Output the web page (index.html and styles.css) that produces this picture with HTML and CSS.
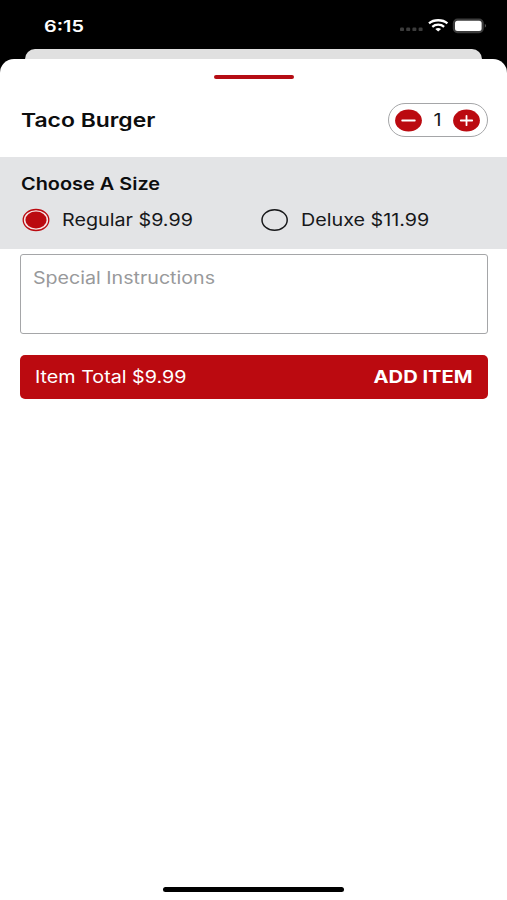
FILE: index.html
```html
<!DOCTYPE html>
<html lang="en">
<head>
<meta charset="utf-8">
<title>Taco Burger</title>
<link rel="stylesheet" href="styles.css">
</head>
<body>
<div class="status">
  <span class="text time">6:15</span>
  <svg class="status-icons" width="90" height="20" viewBox="0 0 90 20">
    <g fill="#3c3c3c"><rect x="2" y="12.5" width="4" height="3.6" rx="1.2"/><rect x="8.2" y="12.5" width="4" height="3.6" rx="1.2"/><rect x="14.4" y="12.5" width="4" height="3.6" rx="1.2"/><rect x="20.6" y="12.5" width="4" height="3.6" rx="1.2"/></g>
    <g fill="none" stroke="#fff" stroke-width="2.3"><path d="M31 8.4C35.8 4.2 44.6 4.2 49.4 8.4"/><path d="M34.3 11.8C37.5 9 42.9 9 46.1 11.8"/></g>
    <path d="M37.3 14Q40.2 12 43.1 14L40.2 16.6Z" fill="#fff"/>
    <rect x="55.9" y="4.7" width="28.8" height="12.4" rx="3.6" fill="#fff" stroke="#3c3c3c" stroke-width="2.2"/>
    <path d="M86.8 8.8Q89.4 10.8 86.8 12.8Z" fill="#555"/>
  </svg>
</div>
<div class="behind"></div>
<main class="sheet">
  <div class="handle"></div>
  <header class="item">
    <h1 class="text title">Taco Burger</h1>
    <div class="stepper">
      <svg width="27" height="23" viewBox="0 0 27 23"><ellipse cx="13.5" cy="11.5" rx="13.4" ry="11.1" fill="#bb0a10"/><path d="M7.2 11.5H19.8" stroke="#fff" stroke-width="1.8" stroke-linecap="round"/></svg>
      <span class="text count">1</span>
      <svg width="27" height="23" viewBox="0 0 27 23"><ellipse cx="13.5" cy="11.5" rx="13.4" ry="11.1" fill="#bb0a10"/><path d="M7.8 11.5H19.2M13.5 6.8V16.2" stroke="#fff" stroke-width="1.8" stroke-linecap="round"/></svg>
    </div>
  </header>
  <section class="size">
    <h2 class="text subtitle">Choose A Size</h2>
    <div class="options">
      <div class="option">
        <svg width="28" height="24" viewBox="0 0 28 24"><ellipse cx="14" cy="12" rx="12.8" ry="10.5" fill="#f7e4e5" stroke="#bb0a10" stroke-width="1.3"/><ellipse cx="14" cy="12" rx="10.6" ry="8.5" fill="#bb0a10"/></svg>
        <span class="text">Regular $9.99</span>
      </div>
      <div class="option">
        <svg width="28" height="24" viewBox="0 0 28 24"><ellipse cx="13.6" cy="12" rx="12.6" ry="10.3" fill="none" stroke="#17181a" stroke-width="1.5"/></svg>
        <span class="text">Deluxe $11.99</span>
      </div>
    </div>
  </section>
  <div class="notes"><span class="text placeholder">Special Instructions</span></div>
  <div class="add">
    <span class="text">Item Total $9.99</span>
    <span class="text action">ADD ITEM</span>
  </div>
  <div class="home"></div>
</main>
</body>
</html>
```
FILE: styles.css
```css
* { box-sizing: border-box; }
body {
  margin: 0;
  height: 900px;
  display: flex;
  flex-direction: column;
  overflow: hidden;
  background: #000;
  color: #17181a;
  font-family: Inter, "Liberation Sans", sans-serif;
}
svg { display: block; flex: none; }
.text {
  display: block;
  width: max-content;
  margin: 0;
  font-size: 17px;
  line-height: 22px;
  font-weight: 400;
  white-space: nowrap;
  transform-origin: left center;
  transform: scaleX(1.16);
}
.status {
  height: 49px;
  display: flex;
  align-items: flex-start;
  justify-content: space-between;
  padding: 15px 19px 0 44px;
}
.time { color: #fff; font-size: 16px; font-weight: 600; transform: scaleX(1.24); }
.behind {
  height: 10px;
  margin: 0 25px;
  border-radius: 12px 12px 0 0;
  background: #e0e0e0;
}
.sheet {
  flex: 1;
  display: flex;
  flex-direction: column;
  background: #fff;
  border-radius: 14px 14px 0 0;
}
.handle {
  width: 80px;
  height: 4px;
  margin: 16px auto 0;
  border-radius: 2px;
  background: #b50d14;
}
.item {
  height: 78px;
  display: flex;
  align-items: flex-start;
  justify-content: space-between;
  padding: 24px 19px 0 21px;
}
.title { margin-top: 7px; color: #0c0d0e; font-size: 19px; font-weight: 600; transform: scaleX(1.205); }
.stepper {
  width: 100px;
  height: 34px;
  display: flex;
  align-items: center;
  justify-content: space-between;
  padding: 0 7px 0 6px;
  border: 1px solid #a5a6a8;
  border-radius: 17px;
}
.count { transform-origin: center; }
.size {
  height: 92px;
  padding: 16px 21px 0;
  background: #e3e4e6;
}
.subtitle { color: #0c0d0e; font-weight: 600; transform: scaleX(1.17); }
.options {
  display: grid;
  grid-template-columns: 239px 1fr;
  margin-top: 13px;
}
.option {
  display: flex;
  align-items: center;
  gap: 12px;
  height: 24px;
}
.option svg { margin-left: 1px; }
.notes {
  height: 80px;
  margin: 5px 19.5px 0 20px;
  padding: 12px 12px;
  border: 1px solid #a5a6a8;
  border-radius: 3px;
}
.placeholder { color: #98999b; transform: scaleX(1.154); }
.add {
  height: 44px;
  margin: 21px 19.5px 0 20px;
  padding: 0 15px;
  display: flex;
  align-items: center;
  justify-content: space-between;
  border-radius: 5px;
  background: #bb0a10;
  color: #fff;
}
.action { font-weight: 700; transform-origin: right center; transform: scaleX(1.185); }
.home {
  width: 181px;
  height: 5px;
  margin: auto auto 8px 163px;
  border-radius: 3px;
  background: #000;
}
```
